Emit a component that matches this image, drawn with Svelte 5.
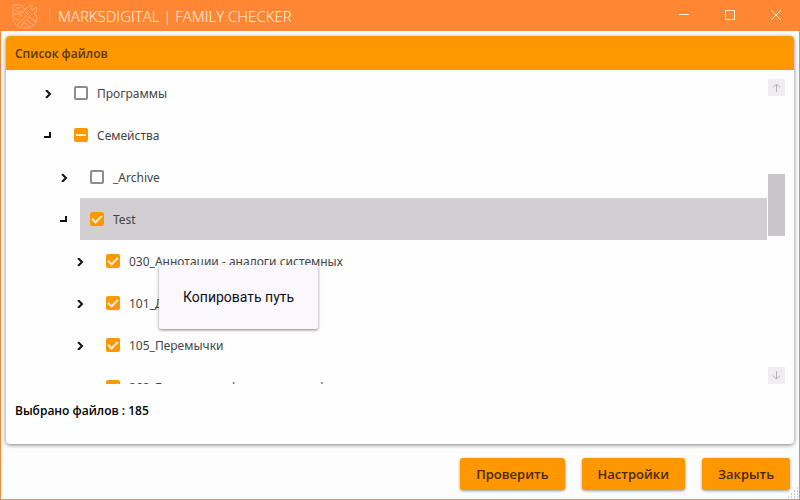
<script lang="ts">
	type Row = {
		name: string;
		depth: number;
		open?: boolean;
		checked?: boolean;
		partial?: boolean;
	};

	let rows: Row[] = $state([
		{ name: 'Программы', depth: 0 },
		{ name: 'Семейства', depth: 0, open: true, partial: true },
		{ name: '_Archive', depth: 1 },
		{ name: 'Test', depth: 1, open: true, checked: true },
		{ name: '030_Аннотации - аналоги системных', depth: 2, checked: true },
		{ name: '101_Двери', depth: 2, checked: true },
		{ name: '105_Перемычки', depth: 2, checked: true },
		{ name: '262_Базовые профили каркасы, фермы', depth: 2, checked: true }
	]);
	let selected = $state(3);
	let menuOpen = $state(true);
	let fileCount = 185;
	let actions = ['Проверить', 'Настройки', 'Закрыть'];
</script>

<div class="window">
	<header class="titlebar">
		<svg class="logo" viewBox="0 0 26 26" aria-hidden="true">
			<path d="M1 2h8l2 3 3 1 4-4h2l-1 4 2 1 3-3 1 3-3 4 3 2c0 8-4 12-12 12S1 21 1 13z" />
			<path d="M3 6l3 3h5l3-3M2 11h6l2 3M14 10l3-3M17 10L7 20M19 12L9 22M7 20l-2 3M14 16l7 6M17 14l7 5M3 15l4 3M9 23l4-3 5 4M4 5h4M12 12l3-3" />
		</svg>
		<span class="divider"></span>
		<h1>MARKSDIGITAL | FAMILY CHECKER</h1>
		<div class="controls">
			<button aria-label="Свернуть">
				<svg viewBox="0 0 10 10"><path d="M0 4.5h10" /></svg>
			</button>
			<button aria-label="Развернуть">
				<svg viewBox="0 0 10 10"><path d="M.5.5h9v9h-9z" /></svg>
			</button>
			<button aria-label="Закрыть окно">
				<svg viewBox="0 0 10 10"><path d="M0 0l10 10M10 0L0 10" /></svg>
			</button>
		</div>
	</header>

	<main class="card">
		<h2>Список файлов</h2>
		<div class="files">
			<ul>
				{#each rows as row, i}
					<li style="padding-left: {row.depth * 16}px">
						<button
							class="toggle"
							aria-label="Раскрыть {row.name}"
							aria-expanded={!!row.open}
							onclick={() => (row.open = !row.open)}
						>
							{#if row.open}
								<svg viewBox="0 0 8 8"><path d="M6 0v5H0" /></svg>
							{:else}
								<svg viewBox="0 0 8 8"><path d="M2 0l4 4-4 4" /></svg>
							{/if}
						</button>
						<label class:selected={selected === i}>
							<input
								type="checkbox"
								bind:checked={row.checked}
								indeterminate={row.partial}
								onchange={() => (selected = i)}
							/>
							{row.name}
						</label>
					</li>
				{/each}
			</ul>
			<div class="scrollbar">
				<button aria-label="Вверх">
					<svg viewBox="0 0 9 9"><path d="M4.5 9V1M1 4.500L4.500 1 8 4.500" /></svg>
				</button>
				<div class="track"><div class="thumb"></div></div>
				<button aria-label="Вниз">
					<svg viewBox="0 0 9 9"><path d="M4.500 0v8M1 4.500L4.500 8 8 4.500" /></svg>
				</button>
			</div>
		</div>
		<p class="count">Выбрано файлов : {fileCount}</p>
	</main>

	<footer>
		{#each actions as action}
			<button>{action}</button>
		{/each}
	</footer>

	<svg class="grip" viewBox="0 0 12 12" aria-hidden="true">
		<path d="M10 1h1M7 4h1M10 4h1M4 7h1M7 7h1M10 7h1M1 10h1M4 10h1M7 10h1M10 10h1" />
	</svg>

	{#if menuOpen}
		<div class="menu" role="menu">
			<button role="menuitem" onclick={() => (menuOpen = false)}>Копировать путь</button>
		</div>
	{/if}
</div>

<style>
	.window {
		position: relative;
		box-sizing: border-box;
		height: 100vh;
		display: flex;
		flex-direction: column;
		border: 1px solid #f08a3c;
		border-top: 0;
		background: #fdfdfd;
		font-family: 'Open Sans', 'Noto Sans', sans-serif;
		font-size: 12px;
		color: #333;
	}

	button {
		font: inherit;
		border: 0;
		padding: 0;
		background: none;
		cursor: pointer;
	}

	svg {
		fill: none;
		stroke: currentColor;
	}

	.titlebar {
		flex: none;
		display: flex;
		align-items: center;
		height: 31px;
		margin: 0 -1px;
		padding-left: 12px;
		background: #ff8734;
		color: #fff6d8;
	}

	.logo {
		width: 26px;
		height: 26px;
		color: #ffac74;
	}

	.divider {
		width: 1px;
		height: 16px;
		margin: 0 8px 0 11px;
		background: #ffa366;
	}

	h1 {
		margin: 0;
		font-size: 15px;
		font-weight: 300;
		line-height: 20px;
		color: #fffbe8;
		white-space: nowrap;
	}

	.controls {
		display: flex;
		align-self: stretch;
		margin-left: auto;
		padding-right: 1px;
	}

	.controls button {
		width: 46px;
		color: inherit;
	}

	.controls svg {
		width: 10px;
		height: 10px;
	}

	.card {
		flex: 1;
		min-height: 0;
		display: flex;
		flex-direction: column;
		margin: 5px 5px 0;
		border-radius: 4px;
		background: #fefefe;
		box-shadow: 0 1px 4px rgba(0, 0, 0, 0.5);
	}

	h2 {
		margin: 0;
		padding: 2px 9px 0;
		border-radius: 4px 4px 0 0;
		background: #ff9800;
		color: #5a3200;
		font-size: 12px;
		font-weight: 600;
		line-height: 32px;
	}

	.files {
		flex: 1;
		min-height: 0;
		display: flex;
		padding: 2px 9px 0;
	}

	ul {
		flex: 1;
		margin: 0;
		padding: 0 0 0 17px;
		list-style: none;
		overflow: hidden;
	}

	li {
		display: flex;
		height: 42px;
	}

	.toggle {
		width: 32px;
		color: #111;
	}

	.toggle svg {
		width: 8px;
		height: 8px;
		stroke-width: 2;
	}

	label {
		flex: 1;
		display: flex;
		align-items: center;
		gap: 9px;
		padding-left: 10px;
		font-family: 'Noto Sans', sans-serif;
		color: #444;
		white-space: nowrap;
	}

	label.selected {
		background: #d1cfd2;
	}

	input {
		appearance: none;
		display: grid;
		place-items: center;
		width: 14px;
		height: 14px;
		margin: 0;
		border: 2px solid #8c8c8c;
		border-radius: 2px;
	}

	input:checked,
	input:indeterminate {
		border-color: #ff9800;
		background: #ff9800;
	}

	input:checked::after {
		content: '';
		width: 8px;
		height: 4px;
		border: solid #fff0d0;
		border-width: 0 0 2px 2px;
		transform: translateY(-1px) rotate(-45deg);
	}

	input:indeterminate::after {
		content: '';
		width: 10px;
		height: 2px;
		background: #fff0d0;
	}

	.scrollbar {
		display: flex;
		flex-direction: column;
		width: 17px;
		margin: 7px 0 0 1px;
	}

	.scrollbar button {
		display: grid;
		place-items: center;
		height: 17px;
		background: #efedf0;
		color: #b5b3b6;
	}

	.scrollbar svg {
		width: 9px;
		height: 9px;
	}

	.track {
		flex: 1;
		padding-top: 78px;
	}

	.thumb {
		height: 62px;
		background: #c8c6c9;
	}

	.count {
		margin: 0;
		padding: 17px 9px 23px;
		color: #000;
		font-weight: 600;
		line-height: 20px;
	}

	footer {
		flex: none;
		display: flex;
		justify-content: flex-end;
		gap: 17px;
		padding: 14px 9px 9px;
	}

	footer button {
		height: 32px;
		padding: 0 16px;
		border-radius: 3px;
		background: #ff9800;
		box-shadow: 0 1px 3px rgba(0, 0, 0, 0.4);
		color: #4a2800;
		font-size: 13px;
		font-weight: 600;
	}

	.grip {
		position: absolute;
		right: 0;
		bottom: 0;
		width: 12px;
		height: 12px;
		color: #999;
	}

	.menu {
		position: absolute;
		left: 158px;
		top: 265px;
		border-radius: 2px;
		background: #faf8fd;
		box-shadow: 0 1px 3px rgba(0, 0, 0, 0.5);
	}

	.menu button {
		padding: 0 24px;
		color: #111;
		font-family: Roboto, sans-serif;
		font-size: 14px;
		font-weight: 400;
		line-height: 64px;
		white-space: nowrap;
	}
</style>
